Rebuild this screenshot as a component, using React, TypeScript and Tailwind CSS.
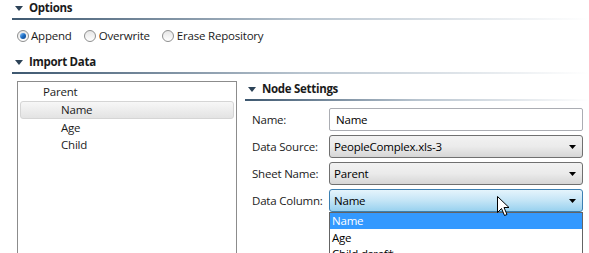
import React from "react";

const font = { fontFamily: '"Open Sans", "Noto Sans", sans-serif' };

function Tri() {
  return (
    <svg width="8" height="5" viewBox="0 0 8 5" className="shrink-0">
      <path d="M0 0 H8 L4 5 Z" fill="#2c4257" />
    </svg>
  );
}

function Header({ title, indent }: { title: string; indent: string }) {
  return (
    <div>
      <div className={`flex items-center h-[16px] gap-[6px] ${indent}`}>
        <Tri />
        <span className="font-bold text-[11.5px] text-[#1b1b1b] tracking-[-0.3px]">{title}</span>
      </div>
      <div className="mt-[2px] h-[2px] bg-gradient-to-r from-[#3e5870] via-[#b8c4cf] to-white" />
    </div>
  );
}

function Radio({ checked }: { checked?: boolean }) {
  return (
    <span className="w-[12px] h-[12px] rounded-full border border-[#8e8f8f] bg-gradient-to-b from-[#e6e6e6] to-[#ffffff] flex items-center justify-center shrink-0">
      {checked && (
        <span className="w-[6px] h-[6px] rounded-full bg-gradient-to-br from-[#86c6ff] via-[#1e6fc4] to-[#0b3f86]" />
      )}
    </span>
  );
}

function Arrow() {
  return (
    <svg width="7" height="4" viewBox="0 0 7 4">
      <path d="M0 0 H7 L3.5 4 Z" fill="#000" />
    </svg>
  );
}

function Select({ value, active }: { value: string; active?: boolean }) {
  return (
    <div
      className={`h-[23px] flex items-center justify-between pl-[4px] pr-[6px] rounded-[3px] border ${
        active
          ? "border-[#3c7fb1] bg-gradient-to-b from-[#e5f4fc] via-[#c4e5f6] to-[#98d1ef]"
          : "border-[#707070] bg-gradient-to-b from-[#f2f2f2] via-[#ebebeb] to-[#d6d6d6]"
      }`}
    >
      <span className="text-black">{value}</span>
      <Arrow />
    </div>
  );
}

function Field({ label, children }: { label: string; children: React.ReactNode }) {
  return (
    <div className="flex items-center">
      <span className="w-[77px] text-[#1b1b1b] shrink-0">{label}</span>
      <div className="w-[254px]">{children}</div>
    </div>
  );
}

export default function App() {
  return (
    <div
      className="w-[589px] h-[253px] bg-white overflow-hidden relative text-[11.5px] tracking-[-0.2px]"
      style={font}
    >
      <div className="pl-[12px] pt-0">
        <Header title="Options" indent="pl-[3px]" />
      </div>
      <div className="flex items-center h-[18px] mt-[7px] pl-[17px] text-[#1b1b1b]">
        <Radio checked />
        <span className="ml-[2px]">Append</span>
        <span className="ml-[12px]"><Radio /></span>
        <span className="ml-[3px]">Overwrite</span>
        <span className="ml-[12px]"><Radio /></span>
        <span className="ml-[3px]">Erase Repository</span>
      </div>
      <div className="pl-[12px] mt-[9px]">
        <Header title="Import Data" indent="pl-[3px]" />
      </div>
      <div className="flex mt-[7px]">
        <div className="ml-[17px] w-[220px] h-[200px] border border-[#8c8c8c] pt-[1px] text-[#1b1b1b]">
          <div className="h-[18px] flex items-center pl-[25px]">Parent</div>
          <div className="mx-[2px] h-[18px] flex items-center pl-[40px] rounded-[3px] border border-[#d5d5d5] bg-gradient-to-b from-[#f7f7f7] to-[#e3e3e3]">
            Name
          </div>
          <div className="h-[17px] flex items-center pl-[43px]">Age</div>
          <div className="h-[17px] flex items-center pl-[43px]">Child</div>
        </div>
        <div className="ml-[8px] flex-1">
          <Header title="Node Settings" indent="pl-[3px]" />
          <div className="pl-[7px] mt-[7px] flex flex-col gap-[4px]">
            <Field label="Name:">
              <div className="h-[23px] flex items-center pl-[6px] border border-[#abadb3] rounded-[2px] bg-white text-black">
                Name
              </div>
            </Field>
            <Field label="Data Source:">
              <Select value="PeopleComplex.xls-3" />
            </Field>
            <Field label="Sheet Name:">
              <Select value="Parent" />
            </Field>
            <Field label="Data Column:">
              <div className="relative">
                <Select value="Name" active />
                <div className="absolute left-0 top-[23px] w-[254px] h-[60px] border border-[#646464] bg-white text-black">
                  <div className="h-[16px] flex items-center pl-[2px] bg-[#3399ff] text-white">Name</div>
                  <div className="h-[16px] flex items-center pl-[2px] mt-[1px]">Age</div>
                  <div className="h-[16px] flex items-center pl-[2px]">Child dsref*</div>
                </div>
              </div>
            </Field>
          </div>
        </div>
      </div>
      <svg className="absolute left-[497px] top-[196px]" width="13" height="21" viewBox="0 0 13 21">
        <path d="M0.5 0.5 L0.5 16.5 L4.5 12.5 L7.5 19.5 L10 18.5 L7 11.5 L12 11.5 Z" fill="#fff" stroke="#000" strokeWidth="1" strokeLinejoin="round" />
      </svg>
    </div>
  );
}
